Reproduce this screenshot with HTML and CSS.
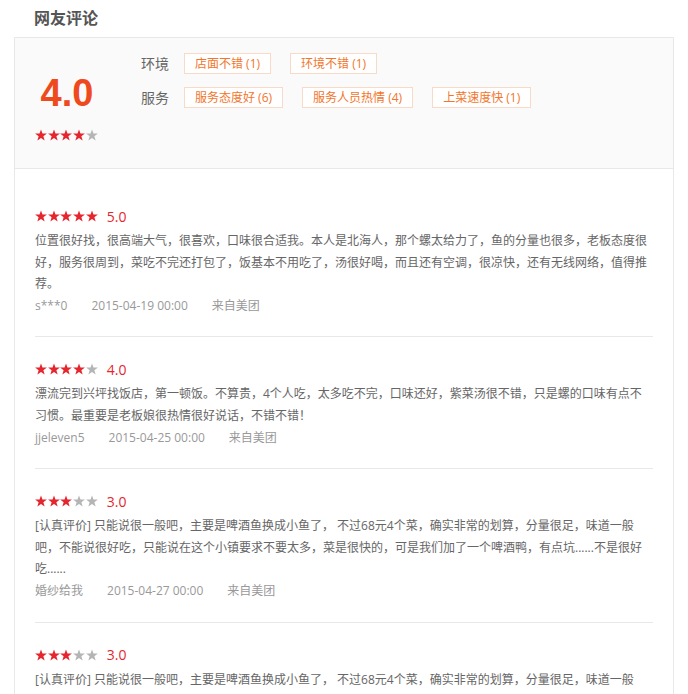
FILE: index.html
```html
<!DOCTYPE html>
<html lang="zh-CN">
<head>
  <meta charset="UTF-8">
  <meta name="viewport" content="width=device-width, initial-scale=1.0"/>
  <title>网友评论</title>
  <link rel="stylesheet" href="styles.css">
</head>
<body>
  <div class="comments">
    <h2 class="comments-title">网友评论</h2>

    <div class="comments-box">
      <!-- summary: average score + tags -->
      <div class="summary">
        <div class="summary-score">
          <div class="score-big">4.0</div>
          <div class="stars" data-score="4"></div>
        </div>
        <div class="summary-tags">
          <div class="tag-row">
            <span class="tag-label">环境</span>
            <span class="tag">店面不错 (1)</span>
            <span class="tag">环境不错 (1)</span>
          </div>
          <div class="tag-row">
            <span class="tag-label">服务</span>
            <span class="tag">服务态度好 (6)</span>
            <span class="tag">服务人员热情 (4)</span>
            <span class="tag">上菜速度快 (1)</span>
          </div>
        </div>
      </div>

      <ul class="review-list" id="review-list"></ul>
    </div>
  </div>

  <script>
    const reviews = [
      {
        score: 5,
        text: "位置很好找，很高端大气，很喜欢，口味很合适我。本人是北海人，那个螺太给力了，鱼的分量也很多，老板态度很好，服务很周到，菜吃不完还打包了，饭基本不用吃了，汤很好喝，而且还有空调，很凉快，还有无线网络，值得推荐。",
        user: "s***0",
        time: "2015-04-19 00:00"
      },
      {
        score: 4,
        text: "漂流完到兴坪找饭店，第一顿饭。不算贵，4个人吃，太多吃不完，口味还好，紫菜汤很不错，只是螺的口味有点不习惯。最重要是老板娘很热情很好说话，不错不错！",
        user: "jjeleven5",
        time: "2015-04-25 00:00"
      },
      {
        score: 3,
        text: "[认真评价] 只能说很一般吧，主要是啤酒鱼换成小鱼了， 不过68元4个菜，确实非常的划算，分量很足，味道一般吧，不能说很好吃，只能说在这个小镇要求不要太多，菜是很快的，可是我们加了一个啤酒鸭，有点坑......不是很好吃......",
        user: "婚纱给我",
        time: "2015-04-27 00:00"
      },
      {
        score: 3,
        text: "[认真评价] 只能说很一般吧，主要是啤酒鱼换成小鱼了， 不过68元4个菜，确实非常的划算，分量很足，味道一般吧，不能说很好吃，只能说在这个小镇要求不要太多，菜是很快的，可是我们加了一个啤酒鸭，有点坑......不是很好吃......",
        user: "婚纱给我",
        time: "2015-04-27 00:00"
      }
    ];

    const starPath = "M6 .4L7.47 4.48 11.9 4.6 8.38 7.3 9.64 11.5 6 9.05 2.36 11.5 3.62 7.3.1 4.6 4.53 4.48Z";

    function starsHtml(score) {
      let html = '';
      for (let i = 0; i < 5; i++) {
        const cls = i < score ? 'star on' : 'star';
        html += `<svg class="${cls}" viewBox="0 0 12 12"><path d="${starPath}"/></svg>`;
      }
      return html;
    }

    document.querySelectorAll('.stars[data-score]').forEach(el => {
      el.innerHTML = starsHtml(Number(el.dataset.score));
    });

    const list = document.getElementById('review-list');
    reviews.forEach(r => {
      const li = document.createElement('li');
      li.className = 'review';
      li.innerHTML = `
        <div class="review-rate">
          <span class="stars">${starsHtml(r.score)}</span>
          <span class="review-score">${r.score.toFixed(1)}</span>
        </div>
        <p class="review-text">${r.text}</p>
        <div class="review-meta">
          <span>${r.user}</span>
          <span>${r.time}</span>
          <span>来自美团</span>
        </div>`;
      list.appendChild(li);
    });
  </script>
</body>
</html>
```

FILE: styles.css
```css
body {
  margin: 0;
  font-family: "Open Sans", "Noto Sans CJK SC", sans-serif;
  color: #666;
  background-color: #fff;
}

.comments {
  width: 660px;
  margin-left: 14px;
}

.comments-title {
  margin: 0 0 1px;
  padding-left: 20px;
  font-size: 16px;
  line-height: 36px;
  font-weight: bold;
  color: #555;
}

.comments-box {
  border: 1px solid #e8e8e8;
}

/* summary */
.summary {
  display: flex;
  box-sizing: border-box;
  height: 131px;
  padding: 15px 20px 0;
  background-color: #fafafa;
  border-bottom: 1px solid #e8e8e8;
}

.summary-score {
  width: 64px;
  margin-right: 42px;
  padding-top: 21px;
  text-align: center;
}

.score-big {
  font-family: "Liberation Sans", Arial, sans-serif;
  font-size: 38px;
  line-height: 38px;
  font-weight: bold;
  color: #ee4a1e;
}

.summary-score .stars {
  margin-top: 17px;
}

.summary-tags {
  display: flex;
  flex-direction: column;
  gap: 13px;
}

.tag-row {
  display: flex;
  align-items: center;
}

.tag-label {
  margin-right: 15px;
  font-size: 14px;
  line-height: 21px;
  color: #666;
}

.tag {
  margin-right: 19px;
  padding: 0 10px;
  font-size: 12px;
  line-height: 19px;
  color: #f2762c;
  background-color: #fff;
  border: 1px solid #f9dac6;
}

/* stars */
.stars {
  display: flex;
  gap: 0.7px;
}

.star {
  width: 12px;
  height: 12px;
  fill: #b5b5b5;
}

.star.on {
  fill: #e5262f;
}

/* reviews */
.review-list {
  list-style: none;
  margin: 0;
  padding: 15px 20px 0;
}

.review {
  padding: 21px 0 20px;
  border-bottom: 1px solid #e8e8e8;
}

.review-rate {
  display: flex;
  align-items: center;
  height: 22px;
}

.review-score {
  margin-left: 9px;
  font-size: 14px;
  color: #e5262f;
}

.review-text {
  margin: 3px 0 0;
  font-size: 12px;
  line-height: 1.8;
  color: #666;
}

.review-meta {
  display: flex;
  gap: 24px;
  font-size: 12px;
  line-height: 21.6px;
  color: #999;
}
```
